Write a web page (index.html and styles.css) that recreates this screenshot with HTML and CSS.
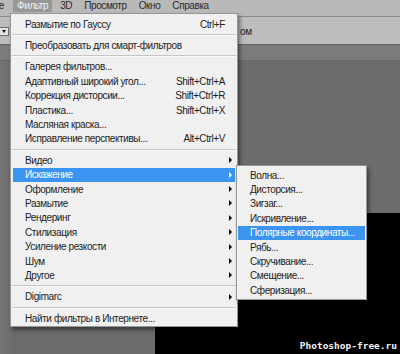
FILE: index.html
```html
<!DOCTYPE html>
<html>
<head>
    <title>Фильтр — Искажение</title>
    <link rel="stylesheet" href="styles.css">
</head>
<body>
    <div class="app">
        <div class="menubar">
            <span class="menubar-item cut">Выделение</span>
            <span class="menubar-item active">Фильтр</span>
            <span class="menubar-item">3D</span>
            <span class="menubar-item">Просмотр</span>
            <span class="menubar-item">Окно</span>
            <span class="menubar-item">Справка</span>
        </div>
        <div class="options">
            <div class="dropdown"><span class="dropdown-arrow"></span></div>
            <span class="options-text">ом</span>
        </div>
        <div class="workspace">
            <div class="tabs"></div>
            <div class="stage">
                <div class="canvas">
                    <span class="watermark">Photoshop-free.ru</span>
                </div>
            </div>
        </div>

        <!-- Фильтр dropdown -->
        <div class="menu filter-menu">
            <div class="item"><span>Размытие по Гауссу</span><span class="key">Ctrl+F</span></div>
            <div class="sep"></div>
            <div class="item"><span>Преобразовать для смарт-фильтров</span></div>
            <div class="sep"></div>
            <div class="item"><span>Галерея фильтров...</span></div>
            <div class="item"><span>Адаптивный широкий угол...</span><span class="key">Shift+Ctrl+A</span></div>
            <div class="item"><span>Коррекция дисторсии...</span><span class="key">Shift+Ctrl+R</span></div>
            <div class="item"><span>Пластика...</span><span class="key">Shift+Ctrl+X</span></div>
            <div class="item"><span>Масляная краска...</span></div>
            <div class="item"><span>Исправление перспективы...</span><span class="key">Alt+Ctrl+V</span></div>
            <div class="sep"></div>
            <div class="item"><span>Видео</span><span class="key"></span><span class="arrow"></span></div>
            <div class="item selected"><span>Искажение</span><span class="key"></span><span class="arrow"></span></div>
            <div class="item"><span>Оформление</span><span class="key"></span><span class="arrow"></span></div>
            <div class="item"><span>Размытие</span><span class="key"></span><span class="arrow"></span></div>
            <div class="item"><span>Рендеринг</span><span class="key"></span><span class="arrow"></span></div>
            <div class="item"><span>Стилизация</span><span class="key"></span><span class="arrow"></span></div>
            <div class="item"><span>Усиление резкости</span><span class="key"></span><span class="arrow"></span></div>
            <div class="item"><span>Шум</span><span class="key"></span><span class="arrow"></span></div>
            <div class="item"><span>Другое</span><span class="key"></span><span class="arrow"></span></div>
            <div class="sep"></div>
            <div class="item"><span>Digimarc</span><span class="key"></span><span class="arrow"></span></div>
            <div class="sep"></div>
            <div class="item"><span>Найти фильтры в Интернете...</span></div>
        </div>

        <!-- Искажение submenu -->
        <div class="menu sub-menu">
            <div class="item"><span>Волна...</span></div>
            <div class="item"><span>Дисторсия...</span></div>
            <div class="item"><span>Зигзаг...</span></div>
            <div class="item"><span>Искривление...</span></div>
            <div class="item selected"><span>Полярные координаты...</span></div>
            <div class="item"><span>Рябь...</span></div>
            <div class="item"><span>Скручивание...</span></div>
            <div class="item"><span>Смещение...</span></div>
            <div class="item"><span>Сферизация...</span></div>
        </div>
    </div>
</body>
</html>
```

FILE: styles.css
```css
:root {
    --bar-bg: #b9b9b9;
    --options-bg: #bdbdbd;
    --work-bg: #6c6c6c;
    --menu-bg: #f0f0f0;
    --menu-border: #979797;
    --menu-text: #1c1c1c;
    --select-bg: #3b94ef;
}

* {
    box-sizing: border-box;
}

body {
    margin: 0;
    width: 400px;
    height: 354px;
    overflow: hidden;
    font-family: 'Liberation Sans', Arial, sans-serif;
    font-size: 10px;
    letter-spacing: -0.4px;
    color: var(--menu-text);
}

.app {
    position: relative;
    display: flex;
    flex-direction: column;
    height: 354px;
    background-color: var(--work-bg);
}

/* top menu bar */
.menubar {
    display: flex;
    gap: 4px;
    height: 17px;
    background-color: var(--bar-bg);
    border-bottom: 1px solid #8a8a8a;
    color: #2a2a2a;
}

.menubar-item {
    height: 12px;
    line-height: 12px;
    padding: 0 4px;
    white-space: nowrap;
}

.menubar-item.cut {
    display: flex;
    justify-content: flex-end;
    width: 5px;
    padding: 0 1px 0 0;
    overflow: hidden;
}

.menubar-item.active {
    margin-left: 4px;
    background-color: #979797;
    color: #efefef;
}

/* options bar */
.options {
    display: flex;
    align-items: center;
    height: 28px;
    background-color: var(--options-bg);
    border-bottom: 1px solid #5e5e5e;
}

.dropdown {
    display: flex;
    align-items: center;
    justify-content: flex-end;
    width: 9px;
    height: 9px;
    margin-top: 2px;
    padding-right: 2px;
    background-color: #e2e2e2;
    border: 1px solid #6f6f6f;
    border-left: none;
}

.dropdown-arrow {
    width: 0;
    height: 0;
    border-left: 2px solid transparent;
    border-right: 2px solid transparent;
    border-top: 3px solid #111;
}

.options-text {
    margin-left: 231px;
    margin-top: 2px;
    color: #222;
}

/* workspace */
.workspace {
    flex: 1;
    display: flex;
    flex-direction: column;
}

.tabs {
    height: 16px;
    background-color: #7b7b7b;
    border-bottom: 1px solid #666;
}

.stage {
    flex: 1;
    display: flex;
    flex-direction: column;
    background: linear-gradient(to right, #767676 0, #6c6c6c 12px);
}

.canvas {
    flex: 1;
    display: flex;
    align-items: flex-end;
    justify-content: flex-end;
    margin: 152px 0 0 155px;
    padding: 0 3px 3px 0;
    background-color: #000;
}

.watermark {
    font-family: 'DejaVu Sans Mono', monospace;
    font-weight: bold;
    font-size: 9.5px;
    letter-spacing: 0;
    line-height: 11px;
    color: #f4f4f4;
}

/* dropdown menus */
.menu {
    position: absolute;
    display: flex;
    flex-direction: column;
    background-color: var(--menu-bg);
    border: 1px solid var(--menu-border);
    box-shadow: 2px 3px 4px rgba(0, 0, 0, 0.45);
}

.filter-menu {
    left: 10px;
    top: 13px;
    width: 228px;
    padding: 3px 0 1px;
}

.sub-menu {
    left: 236px;
    top: 165px;
    width: 131px;
    padding: 2px 0 1px;
}

.item {
    display: grid;
    grid-template-columns: 1fr auto 7px;
    align-items: center;
    height: 14.4px;
    margin: 0 2px;
    padding: 0 3px 0 12px;
    white-space: nowrap;
}

.sub-menu .item {
    margin: 0 1px;
    padding-left: 12px;
}

.item.selected {
    background-color: var(--select-bg);
    color: #fff;
}

.key {
    text-align: right;
}

.arrow {
    justify-self: end;
    width: 0;
    height: 0;
    border-left: 3px solid #000;
    border-top: 3px solid transparent;
    border-bottom: 3px solid transparent;
}

.item.selected .arrow {
    border-left-color: #fff;
}

.sep {
    height: 7px;
    display: flex;
    flex-direction: column;
    justify-content: center;
    margin: 0 1px;
}

.sep::before {
    content: "";
    border-top: 1px solid #c6c6c6;
    border-bottom: 1px solid #fbfbfb;
}
```
